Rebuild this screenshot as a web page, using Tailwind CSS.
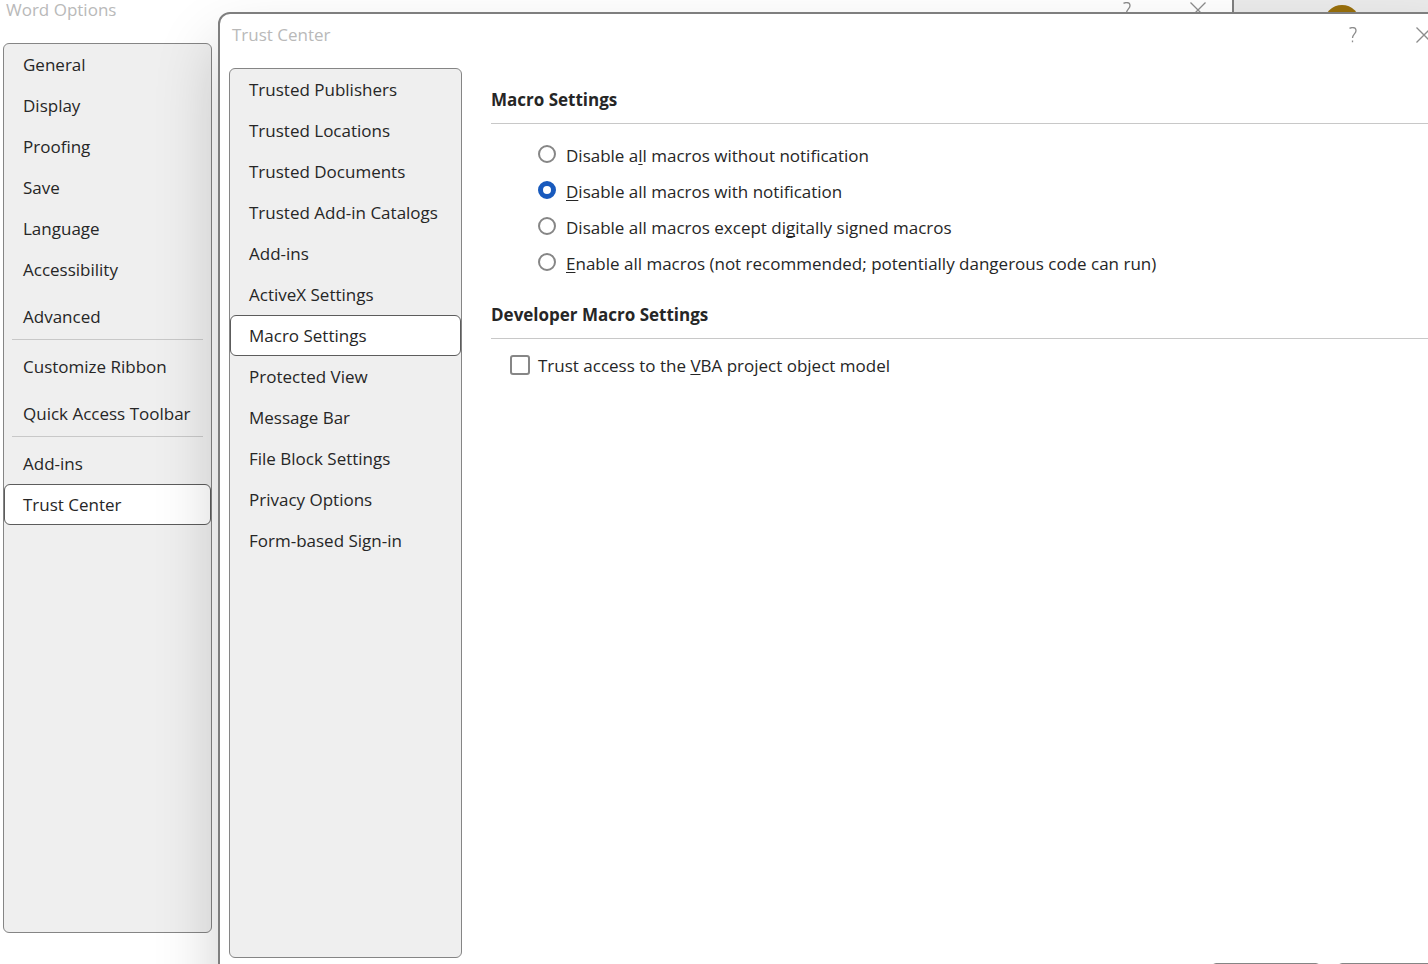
<!DOCTYPE html>
<html lang="en">
<head>
<meta charset="utf-8">
<title>Trust Center</title>
<script src="https://cdn.jsdelivr.net/npm/@tailwindcss/browser@4"></script>
</head>
<body class="relative h-screen overflow-hidden bg-[#ebebeb] font-['Open_Sans','Noto_Sans',sans-serif] text-[17px] leading-6 text-[#262626]">

<!-- Account avatar of the application behind the dialogs -->
<div class="absolute top-[5px] right-[68px] size-9 rounded-full bg-[#986f0b]"></div>

<!-- Word Options window -->
<section class="mr-[194px] flex h-full flex-col border-r-2 border-[#7f7f7f] bg-white pb-[31px] pl-[3px]" aria-label="Word Options">
  <header class="flex h-[43px] shrink-0 items-start justify-between pr-[26px] pl-[3px] text-[#b9b9b9]">
    <h1 class="-mt-[2px]">Word Options</h1>
    <div class="flex gap-[57px] pt-[2px] text-[#8c8c8c]">
      <button aria-label="Help" class="h-4 w-3"><svg class="h-4 w-3" viewBox="0 0 12 16" fill="none" stroke="currentColor" stroke-width="1.3"><path d="M2.5 1.4C3.5.8 4.5.6 5.6.6C7.7.6 9 1.8 9 3.7C9 6.6 5.5 7.2 5.5 11M5.5 13.5V15.3"/></svg></button>
      <button aria-label="Close" class="size-4"><svg class="size-4" viewBox="0 0 16 16" fill="none" stroke="currentColor" stroke-width="1.3"><path d="M.5.5L15.5 15.5M15.5.5L.5 15.5"/></svg></button>
    </div>
  </header>
  <nav class="flex w-[209px] flex-1 flex-col rounded-md border border-[#858585] bg-[#efefef]">
    <button class="h-[41px] rounded-md border border-transparent px-[18px] text-left">General</button>
    <button class="h-[41px] rounded-md border border-transparent px-[18px] text-left">Display</button>
    <button class="h-[41px] rounded-md border border-transparent px-[18px] text-left">Proofing</button>
    <button class="h-[41px] rounded-md border border-transparent px-[18px] text-left">Save</button>
    <button class="h-[41px] rounded-md border border-transparent px-[18px] text-left">Language</button>
    <button class="h-[41px] rounded-md border border-transparent px-[18px] text-left">Accessibility</button>
    <button class="mt-[6px] h-[41px] rounded-md border border-transparent px-[18px] text-left">Advanced</button>
    <hr class="mx-2 mt-[2px] border-[#c8c8c8]">
    <button class="mt-[6px] h-[41px] rounded-md border border-transparent px-[18px] text-left">Customize Ribbon</button>
    <button class="mt-[6px] h-[41px] rounded-md border border-transparent px-[18px] text-left whitespace-nowrap">Quick Access Toolbar</button>
    <hr class="mx-2 mt-[2px] border-[#c8c8c8]">
    <button class="mt-[6px] h-[41px] rounded-md border border-transparent px-[18px] text-left">Add-ins</button>
    <button class="h-[41px] rounded-md border border-[#5c5c5c] bg-white px-[18px] text-left" aria-current="page">Trust Center</button>
  </nav>
</section>

<!-- Trust Center dialog, running past the right and bottom edges -->
<section class="absolute top-3 -right-[30px] -bottom-10 left-[218px] flex flex-col rounded-xl border-2 border-[#7f7f7f] bg-white pr-[10px] pl-[9px] shadow-[0_32px_64px_rgba(0,0,0,0.19)]" role="dialog" aria-label="Trust Center">
  <header class="flex h-[54px] shrink-0 items-start justify-between pr-[14px] pl-[3px] text-[#b9b9b9]">
    <h2 class="pt-[9px]">Trust Center</h2>
    <div class="flex gap-[57px] pt-[13px] text-[#8c8c8c]">
      <button aria-label="Help" class="h-4 w-3"><svg class="h-4 w-3" viewBox="0 0 12 16" fill="none" stroke="currentColor" stroke-width="1.3"><path d="M2.5 1.4C3.5.8 4.5.6 5.6.6C7.7.6 9 1.8 9 3.7C9 6.6 5.5 7.2 5.5 11M5.5 13.5V15.3"/></svg></button>
      <button aria-label="Close" class="size-4"><svg class="size-4" viewBox="0 0 16 16" fill="none" stroke="currentColor" stroke-width="1.3"><path d="M.5.5L15.5 15.5M15.5.5L.5 15.5"/></svg></button>
    </div>
  </header>

  <div class="flex flex-1">
    <nav class="flex w-[233px] shrink-0 flex-col rounded-md border border-[#858585] bg-[#efefef]">
      <button class="h-[41px] rounded-md border border-transparent px-[18px] text-left">Trusted Publishers</button>
      <button class="h-[41px] rounded-md border border-transparent px-[18px] text-left">Trusted Locations</button>
      <button class="h-[41px] rounded-md border border-transparent px-[18px] text-left">Trusted Documents</button>
      <button class="h-[41px] rounded-md border border-transparent px-[18px] text-left whitespace-nowrap">Trusted Add-in Catalogs</button>
      <button class="h-[41px] rounded-md border border-transparent px-[18px] text-left">Add-ins</button>
      <button class="h-[41px] rounded-md border border-transparent px-[18px] text-left">ActiveX Settings</button>
      <button class="h-[41px] rounded-md border border-[#5c5c5c] bg-white px-[18px] text-left" aria-current="page">Macro Settings</button>
      <button class="h-[41px] rounded-md border border-transparent px-[18px] text-left">Protected View</button>
      <button class="h-[41px] rounded-md border border-transparent px-[18px] text-left">Message Bar</button>
      <button class="h-[41px] rounded-md border border-transparent px-[18px] text-left">File Block Settings</button>
      <button class="h-[41px] rounded-md border border-transparent px-[18px] text-left">Privacy Options</button>
      <button class="h-[41px] rounded-md border border-transparent px-[18px] text-left">Form-based Sign-in</button>
    </nav>

    <div class="flex-1 pt-5 pl-[29px]">
      <h3 class="border-b border-[#c8c8c8] pb-[11px] font-bold">Macro Settings</h3>
      <div class="flex flex-col gap-3 pt-5 pl-[47px]" role="radiogroup" aria-label="Macro Settings">
        <label class="flex items-start gap-[10px]"><input type="radio" name="macro" class="mt-px size-[18px] shrink-0 appearance-none rounded-full border-2 border-[#868686] bg-white checked:border-[5px] checked:border-[#185abd]"><span>Disable a<span class="underline decoration-1 underline-offset-2 [text-decoration-skip-ink:none]">l</span>l macros without notification</span></label>
        <label class="flex items-start gap-[10px]"><input type="radio" name="macro" checked class="mt-px size-[18px] shrink-0 appearance-none rounded-full border-2 border-[#868686] bg-white checked:border-[5px] checked:border-[#185abd]"><span><span class="underline decoration-1 underline-offset-2 [text-decoration-skip-ink:none]">D</span>isable all macros with notification</span></label>
        <label class="flex items-start gap-[10px]"><input type="radio" name="macro" class="mt-px size-[18px] shrink-0 appearance-none rounded-full border-2 border-[#868686] bg-white checked:border-[5px] checked:border-[#185abd]"><span>Disable all macros except di<span class="underline decoration-1 underline-offset-2 [text-decoration-skip-ink:none]">g</span>itally signed macros</span></label>
        <label class="flex items-start gap-[10px]"><input type="radio" name="macro" class="mt-px size-[18px] shrink-0 appearance-none rounded-full border-2 border-[#868686] bg-white checked:border-[5px] checked:border-[#185abd]"><span><span class="underline decoration-1 underline-offset-2 [text-decoration-skip-ink:none]">E</span>nable all macros (not recommended; potentially dangerous code can run)</span></label>
      </div>

      <h3 class="mt-[27px] border-b border-[#c8c8c8] pb-[11px] font-bold">Developer Macro Settings</h3>
      <label class="mt-[15px] flex items-start gap-2 pl-[19px]"><input type="checkbox" class="mt-px size-5 shrink-0 appearance-none rounded-[3px] border-2 border-[#868686] bg-white"><span>Trust access to the <span class="underline decoration-1 underline-offset-2 [text-decoration-skip-ink:none]">V</span>BA project object model</span></label>
    </div>
  </div>

  <footer class="flex h-11 shrink-0 justify-end gap-[18px] pt-[5px]">
    <button class="h-8 w-[108px] rounded-sm border border-[#858585]" aria-label="OK"></button>
    <button class="h-8 w-[108px] rounded-sm border border-[#858585]" aria-label="Cancel"></button>
  </footer>
</section>
</body>
</html>
